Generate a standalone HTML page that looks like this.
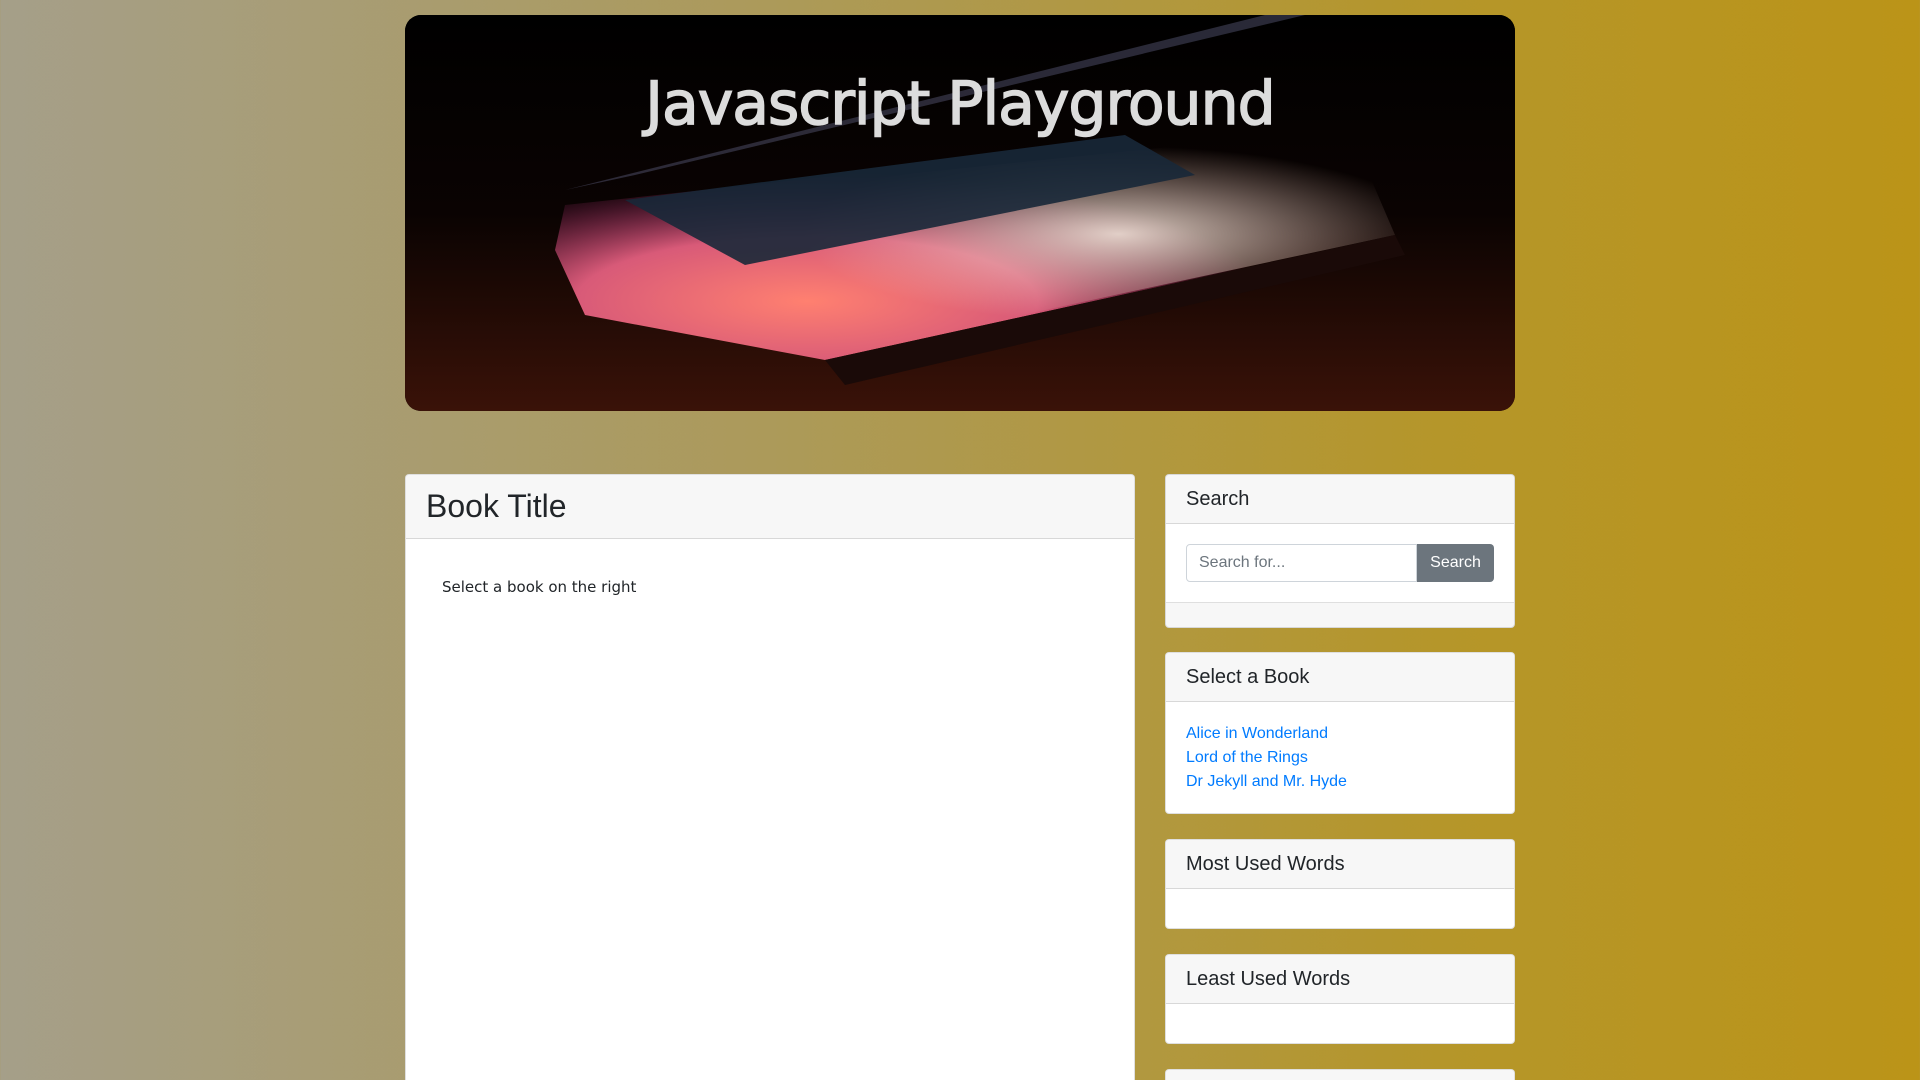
<!DOCTYPE html>
<html><head><meta charset="utf-8"><style>
*{box-sizing:border-box;margin:0;padding:0}
html,body{width:1920px;height:1080px;overflow:hidden}
body{background:linear-gradient(90deg,#a59f89 0%,#ac9a5a 40%,#b5962a 75%,#bb9418 100%);font-family:"Liberation Sans",sans-serif;color:#212529;position:relative}
.hero{position:absolute;left:405px;top:15px;width:1110px;height:396px;border-radius:16px;overflow:hidden;background:#000}
.hero .l{position:absolute;inset:0}
.hero h1{position:absolute;left:0;right:0;top:54px;text-align:center;font-family:"DejaVu Sans",sans-serif;font-weight:400;font-size:60px;letter-spacing:-1px;color:#dcdcdc;-webkit-text-stroke:1.5px #dcdcdc}
.card{position:absolute;background:#fff;border:1px solid rgba(0,0,0,.125);border-radius:4px;overflow:hidden}
.ch{background:#f7f7f7;border-bottom:1px solid rgba(0,0,0,.125);padding:0 20px;font-size:20px;display:flex;align-items:center}
.links a{display:block;color:#007bff;text-decoration:none;font-size:16px;line-height:24px}
</style></head><body>
<div class="hero">
<svg class="l" width="1110" height="396" viewBox="0 0 1110 396">
<defs>
<radialGradient id="g1" cx="0.3" cy="0.75" r="0.55"><stop offset="0" stop-color="#ff8070"/><stop offset=".5" stop-color="#d85a78"/><stop offset="1" stop-color="#902060" stop-opacity="0"/></radialGradient>
<radialGradient id="g2" cx="0.65" cy="0.45" r="0.4"><stop offset="0" stop-color="#f4e4da"/><stop offset="1" stop-color="#f0c8b8" stop-opacity="0"/></radialGradient>
<linearGradient id="tb" x1="0" y1="0" x2="0" y2="1"><stop offset="0" stop-color="#000"/><stop offset=".5" stop-color="#0a0302"/><stop offset="1" stop-color="#3a1208"/></linearGradient>
</defs>
<rect width="1110" height="396" fill="url(#tb)"/>
<polygon points="160,190 900,110 960,150 990,220 420,345 180,300 150,235" fill="url(#g1)"/>
<polygon points="200,190 880,120 960,150 990,220 430,340 200,290" fill="url(#g2)" opacity=".9"/>
<polygon points="220,185 720,120 790,160 340,250" fill="#182838" opacity=".9"/>
<polygon points="160,175 860,0 900,0 230,160" fill="#5a5a7a" opacity=".45"/>
<polygon points="420,345 990,220 1000,240 440,370" fill="#1a0a08"/>
</svg>
<h1>Javascript Playground</h1>
</div>

<div class="card" style="left:405px;top:474px;width:730px;height:620px">
<div class="ch" style="height:64px;font-size:32px">Book Title</div>
<div style="padding:39px 36px;font-family:'DejaVu Sans',sans-serif;font-size:15px">Select a book on the right</div>
</div>

<div class="card" style="left:1165px;top:474px;width:350px;height:154px;background:#f7f7f7">
<div class="ch" style="height:49px">Search</div>
<div style="background:#fff;height:79px;border-bottom:1px solid rgba(0,0,0,.125);padding:20px 20px;display:flex">
<div style="flex:1;height:38px;border:1px solid #ced4da;border-radius:4px 0 0 4px;padding:0 12px;line-height:36px;color:#6c757d;font-size:16px">Search for...</div>
<div style="width:77px;height:38px;background:#6c757d;color:#fff;border-radius:0 4px 4px 0;line-height:38px;text-align:center;font-size:16px">Search</div>
</div>
</div>

<div class="card" style="left:1165px;top:652px;width:350px;height:162px">
<div class="ch" style="height:49px">Select a Book</div>
<div class="links" style="padding:20px 20px">
<a>Alice in Wonderland</a><a>Lord of the Rings</a><a>Dr Jekyll and Mr. Hyde</a>
</div>
</div>

<div class="card" style="left:1165px;top:839px;width:350px;height:90px">
<div class="ch" style="height:49px">Most Used Words</div>
</div>

<div class="card" style="left:1165px;top:954px;width:350px;height:90px">
<div class="ch" style="height:49px">Least Used Words</div>
</div>

<div class="card" style="left:1165px;top:1069px;width:350px;height:40px">
<div class="ch" style="height:40px"></div>
</div>
</body></html>
